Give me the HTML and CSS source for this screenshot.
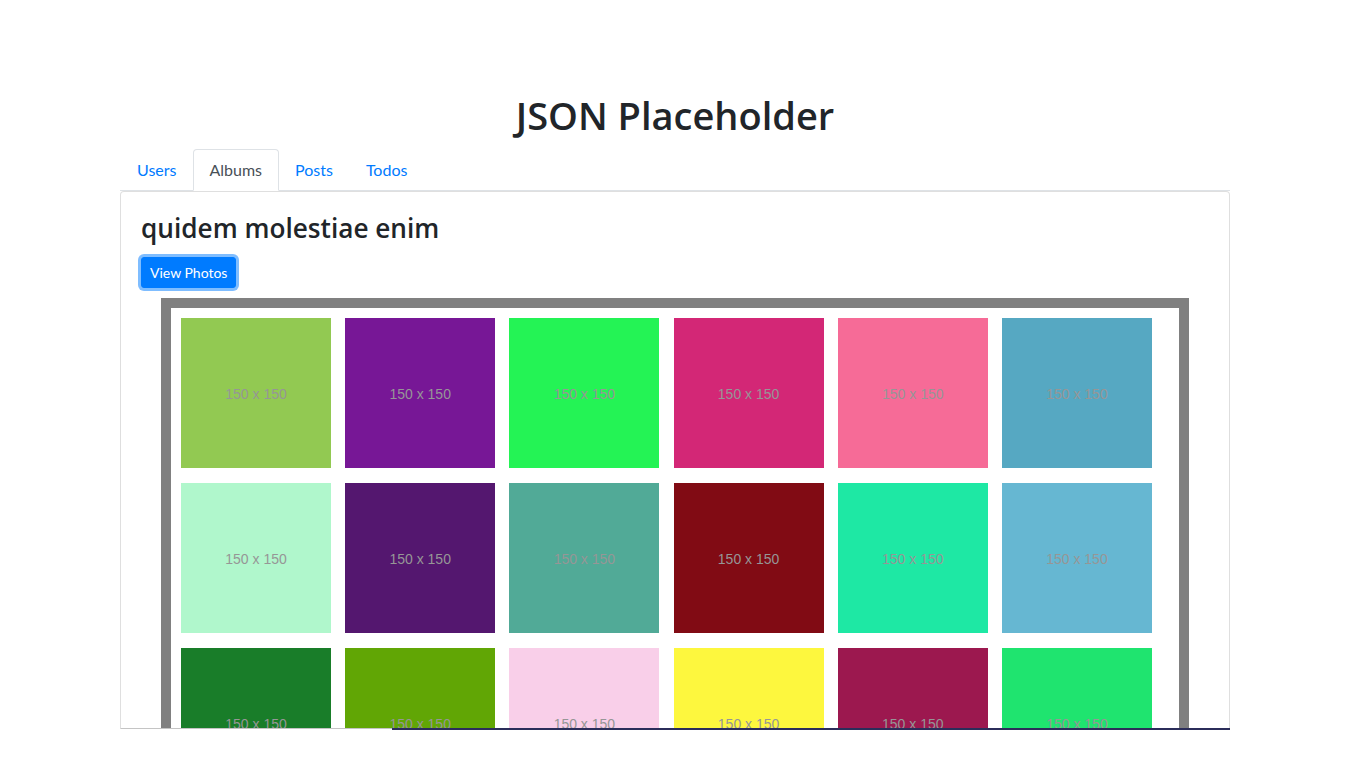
FILE: index.html
```html
<!DOCTYPE html>
<html lang="en">
<head>
<meta charset="utf-8">
<title>JSON Placeholder</title>
<link rel="stylesheet" href="styles.css">
</head>
<body>
  <div class="container">
    <h1 class="title">JSON Placeholder</h1>
    <ul class="tabs">
      <li class="tab"><a class="tab-link" href="#">Users</a></li>
      <li class="tab"><a class="tab-link active" href="#">Albums</a></li>
      <li class="tab"><a class="tab-link" href="#">Posts</a></li>
      <li class="tab"><a class="tab-link" href="#">Todos</a></li>
    </ul>
    <div class="card">
      <div class="card-body">
        <h3 class="album-title">quidem molestiae enim</h3>
        <button class="btn" type="button">View Photos</button>
        <div class="frame">
          <div class="tile t1">150 x 150</div>
          <div class="tile t2">150 x 150</div>
          <div class="tile t3">150 x 150</div>
          <div class="tile t4">150 x 150</div>
          <div class="tile t5">150 x 150</div>
          <div class="tile t6">150 x 150</div>
          <div class="tile t7">150 x 150</div>
          <div class="tile t8">150 x 150</div>
          <div class="tile t9">150 x 150</div>
          <div class="tile t10">150 x 150</div>
          <div class="tile t11">150 x 150</div>
          <div class="tile t12">150 x 150</div>
          <div class="tile t13">150 x 150</div>
          <div class="tile t14">150 x 150</div>
          <div class="tile t15">150 x 150</div>
          <div class="tile t16">150 x 150</div>
          <div class="tile t17">150 x 150</div>
          <div class="tile t18">150 x 150</div>
        </div>
      </div>
    </div>
  </div>
  <div class="scroll-thumb"></div>
</body>
</html>
```

FILE: styles.css
```css
* { box-sizing: border-box; }
html, body { margin: 0; padding: 0; background: #fff; }
body {
  font-family: "Lato", "Noto Sans", "Liberation Sans", sans-serif;
  font-size: 16px;
  line-height: 1.5;
  color: #212529;
  height: 768px;
  overflow: hidden;
  position: relative;
}
.container {
  width: 1110px;
  margin-left: 120px;
  padding-top: 94px;
}
.title {
  margin: 0 0 11.8px;
  font-family: "Open Sans", "Lato", sans-serif;
  font-size: 38px;
  line-height: 43.2px;
  font-weight: 600;
  text-align: center;
  color: #212529;
}
.tabs {
  list-style: none;
  margin: 0;
  padding: 0;
  display: flex;
  border-bottom: 1px solid #dee2e6;
}
.tab { margin-bottom: -1px; }
.tab-link {
  display: block;
  padding: 8px 15.5px;
  border: 1px solid transparent;
  border-top-left-radius: 4px;
  border-top-right-radius: 4px;
  color: #007bff;
  text-decoration: none;
  line-height: 24px;
}
.tabs .tab:first-child .tab-link { padding-left: 16px; }
.tab-link.active {
  color: #495057;
  background: #fff;
  border-color: #dee2e6 #dee2e6 #fff;
}
.card {
  height: 538px;
  border: 1px solid rgba(0,0,0,.125);
  border-bottom-color: #c4c4c4;
  border-radius: 4px 4px 0 0;
  overflow: hidden;
}
.card-body { padding: 20px; }
.album-title {
  margin: 0 0 11px;
  font-family: "Open Sans", "Lato", sans-serif;
  font-size: 26.2px;
  line-height: 33.6px;
  font-weight: 600;
}
.btn {
  display: block;
  height: 31px;
  padding: 0 8px;
  font-family: inherit;
  font-size: 14px;
  line-height: 21px;
  color: #fff;
  background: #007bff;
  border: 1px solid #007bff;
  border-radius: 3px;
  box-shadow: 0 0 0 3px rgba(0,123,255,.5);
  cursor: pointer;
}
.frame {
  margin: 10px 20px 0;
  border: 10px solid #808080;
  padding: 10px;
  display: flex;
  flex-wrap: wrap;
  column-gap: 14.2px;
  row-gap: 15px;
}
.tile {
  width: 150px;
  height: 150px;
  padding-top: 4px;
  display: flex;
  align-items: center;
  justify-content: center;
  font-family: "Liberation Sans", Arial, sans-serif;
  font-size: 14px;
  color: #969696;
}
.t1 { background: #92c952; }
.t2 { background: #771796; }
.t3 { background: #24f355; }
.t4 { background: #d32776; }
.t5 { background: #f66b97; }
.t6 { background: #56a8c2; }
.t7 { background: #b0f7cc; }
.t8 { background: #54176f; }
.t9 { background: #51aa97; }
.t10 { background: #810b14; }
.t11 { background: #1ee8a4; }
.t12 { background: #66b7d2; }
.t13 { background: #197d29; }
.t14 { background: #61a605; }
.t15 { background: #f9cfe9; }
.t16 { background: #fdf73e; }
.t17 { background: #9c184f; }
.t18 { background: #1fe46f; }
.scroll-thumb {
  position: absolute;
  left: 392px;
  top: 728px;
  width: 838px;
  height: 2px;
  background: #2b2d5a;
}
```
